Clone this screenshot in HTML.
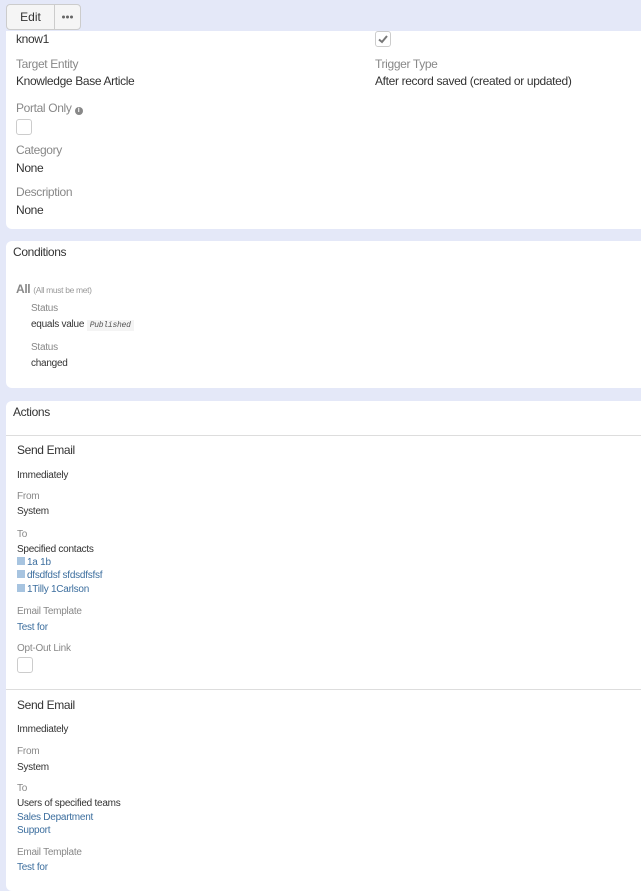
<!DOCTYPE html>
<html><head><meta charset="utf-8"><style>
body{margin:0;width:641px;height:876px;overflow:hidden;background:#e4e8f8;font-family:"Liberation Sans",sans-serif;position:relative}
.p{position:absolute;left:6px;right:-10px;background:#fff;border-radius:6px}
.t{position:absolute;white-space:nowrap;font-size:12px;color:#333;line-height:14px;letter-spacing:-0.35px}
.l{color:#888}
.s{font-size:10px;line-height:12px;letter-spacing:-0.25px;margin-top:1px}
.a{color:#3c6e9e}
.cb{position:absolute;width:14px;height:14px;border:1px solid #ccc;border-radius:3px;background:#fff}
.hr{position:absolute;left:6px;right:0;height:1px;background:#ddd}
.sq{display:inline-block;width:8px;height:8px;background:#a7c4e0;margin-right:2px}
</style></head><body>
<div style="position:absolute;left:6px;top:4px;width:47px;height:24px;border:1px solid #ccc;border-radius:4px 0 0 4px;background:#f5f5f5;font-size:12px;line-height:24px;text-align:center;color:#333">Edit</div>
<div style="position:absolute;left:54px;top:4px;width:25px;height:24px;border:1px solid #ccc;border-radius:0 4px 4px 0;background:#f5f5f5">
<svg width="25" height="24" style="position:absolute;left:0;top:0"><circle cx="8.5" cy="12" r="1.5" fill="#666"/><circle cx="12.5" cy="12" r="1.5" fill="#666"/><circle cx="16.5" cy="12" r="1.5" fill="#666"/></svg></div>
<div class="p" style="top:31px;height:198px;border-radius:0 0 6px 6px"></div>
<div class="p" style="top:241px;height:147px"></div>
<div class="p" style="top:401px;height:490px"></div>

<div class="t" style="left:16px;top:32px">know1</div>
<div class="cb" style="left:375px;top:31px"><svg width="14" height="14" style="position:absolute;left:0;top:0"><path d="M3 7.5 L6 10 L11 4" stroke="#777" stroke-width="2" fill="none"/></svg></div>
<div class="t l" style="left:16px;top:57px">Target Entity</div>
<div class="t" style="left:16px;top:74px">Knowledge Base Article</div>
<div class="t l" style="left:375px;top:57px">Trigger Type</div>
<div class="t" style="left:375px;top:74px">After record saved (created or updated)</div>
<div class="t l" style="left:16px;top:101px">Portal Only <span style="display:inline-block;width:8px;height:8px;border-radius:50%;background:#888;color:#fff;font-size:7px;line-height:8px;text-align:center;font-weight:bold">i</span></div>
<div class="cb" style="left:16px;top:119px"></div>
<div class="t l" style="left:16px;top:143px">Category</div>
<div class="t" style="left:16px;top:161px">None</div>
<div class="t l" style="left:16px;top:185px">Description</div>
<div class="t" style="left:16px;top:203px">None</div>

<div class="t" style="left:13px;top:245px">Conditions</div>
<div class="t l" style="left:16px;top:282px;font-weight:bold;font-size:12px">All <span style="font-weight:normal;font-size:8.5px;color:#999">(All must be met)</span></div>
<div class="t l s" style="left:31px;top:302px">Status</div>
<div class="t s" style="left:31px;top:318px">equals value <span style="background:#f4f4f4;font-family:'Liberation Mono',monospace;font-style:italic;font-size:8px;color:#555;padding:1px 3px">Published</span></div>
<div class="t l s" style="left:31px;top:341px">Status</div>
<div class="t s" style="left:31px;top:357px">changed</div>

<div class="t" style="left:13px;top:405px">Actions</div>
<div class="hr" style="top:435px"></div>
<div class="t" style="left:17px;top:443px">Send Email</div>
<div class="t s" style="left:17px;top:469px">Immediately</div>
<div class="t l s" style="left:17px;top:490px">From</div>
<div class="t s" style="left:17px;top:505px">System</div>
<div class="t l s" style="left:17px;top:528px">To</div>
<div class="t s" style="left:17px;top:543px">Specified contacts</div>
<div class="t s a" style="left:17px;top:556px"><span class="sq"></span>1a 1b</div>
<div class="t s a" style="left:17px;top:569px"><span class="sq"></span>dfsdfdsf sfdsdfsfsf</div>
<div class="t s a" style="left:17px;top:583px"><span class="sq"></span>1Tilly 1Carlson</div>
<div class="t l s" style="left:17px;top:605px">Email Template</div>
<div class="t s a" style="left:17px;top:621px">Test for</div>
<div class="t l s" style="left:17px;top:642px">Opt-Out Link</div>
<div class="cb" style="left:17px;top:657px"></div>
<div class="hr" style="top:689px"></div>
<div class="t" style="left:17px;top:698px">Send Email</div>
<div class="t s" style="left:17px;top:723px">Immediately</div>
<div class="t l s" style="left:17px;top:745px">From</div>
<div class="t s" style="left:17px;top:761px">System</div>
<div class="t l s" style="left:17px;top:782px">To</div>
<div class="t s" style="left:17px;top:797px">Users of specified teams</div>
<div class="t s a" style="left:17px;top:811px">Sales Department</div>
<div class="t s a" style="left:17px;top:824px">Support</div>
<div class="t l s" style="left:17px;top:846px">Email Template</div>
<div class="t s a" style="left:17px;top:861px">Test for</div>
</body></html>
